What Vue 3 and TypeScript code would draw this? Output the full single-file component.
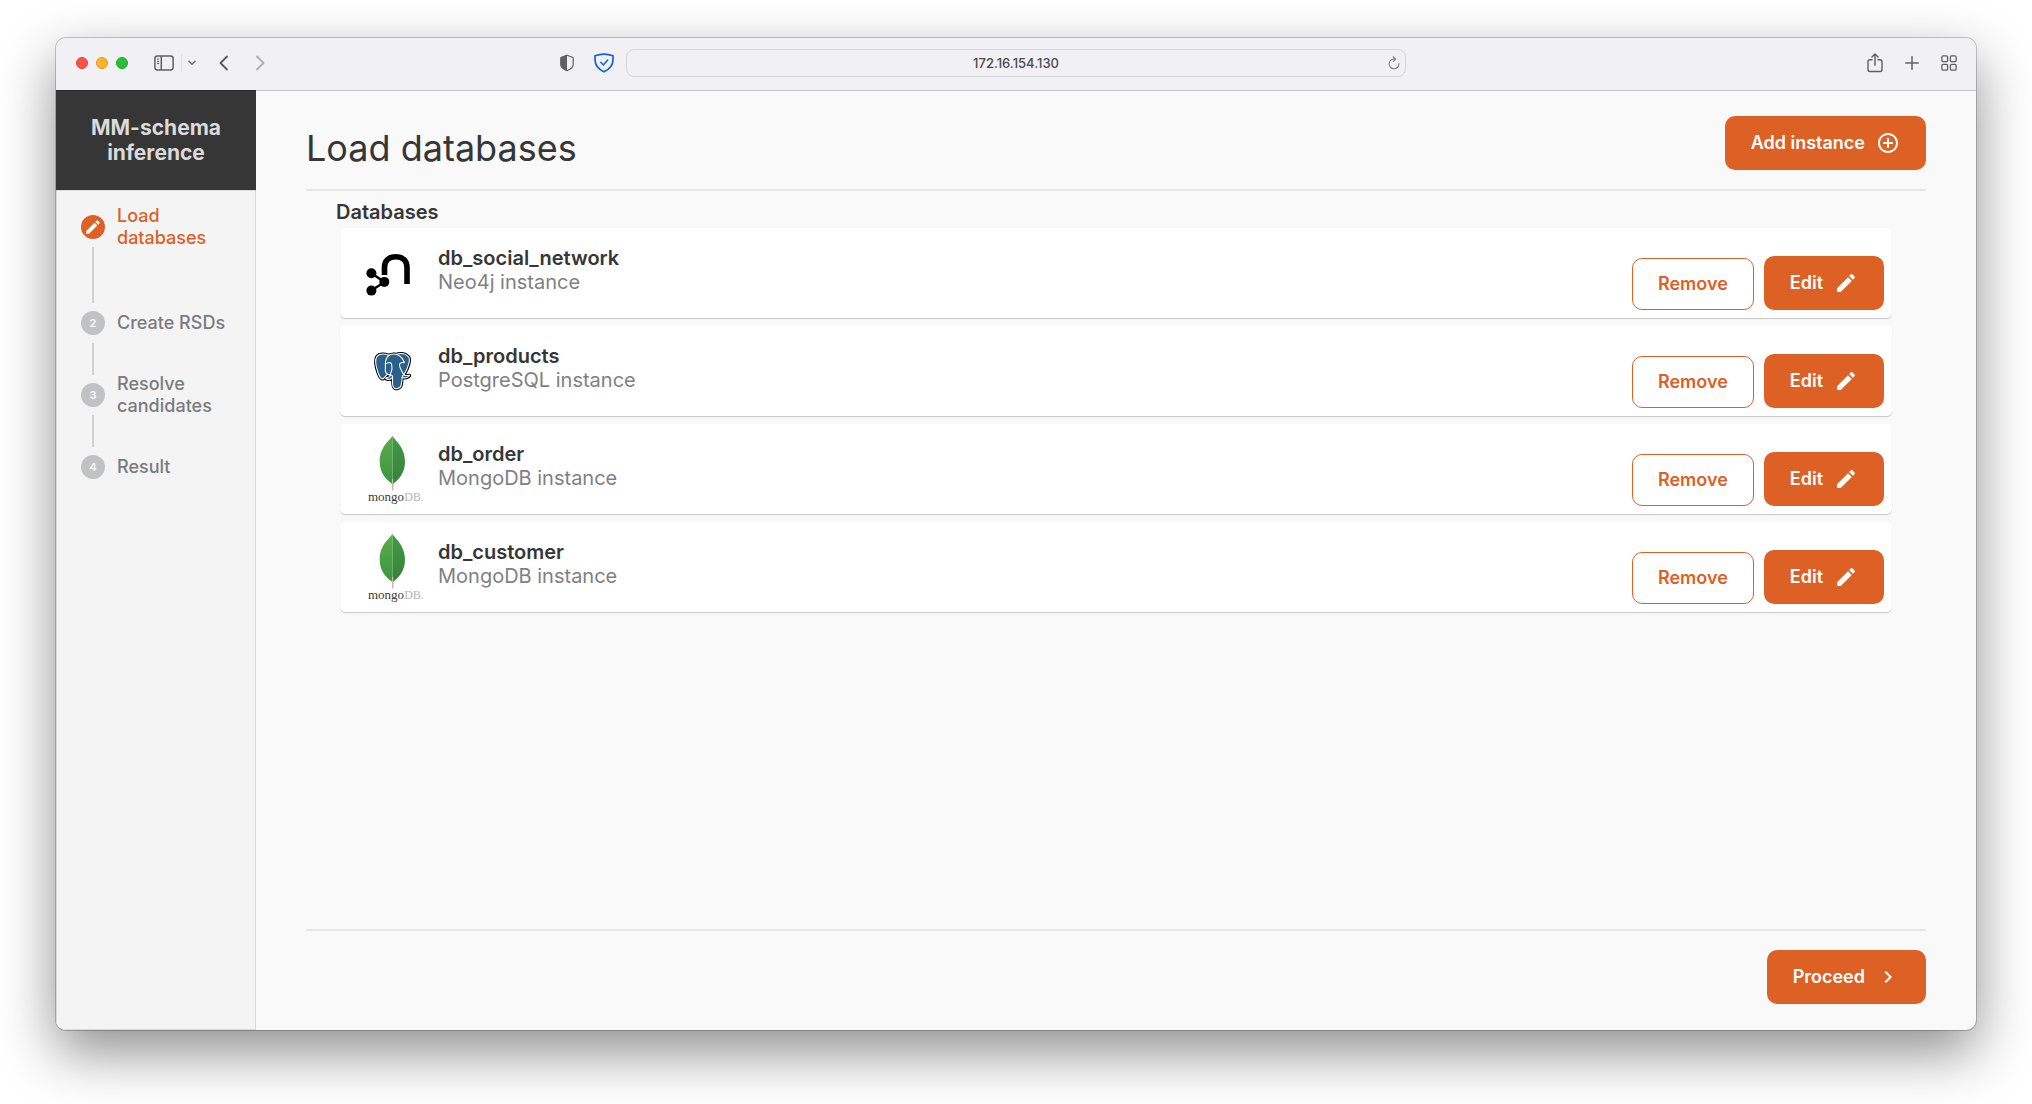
<script setup lang="ts">
type Engine = 'neo4j' | 'postgres' | 'mongo'

interface Database {
  name: string
  kind: string
  engine: Engine
}

interface Step {
  label: string
  state: 'active' | 'pending'
}

const databases: Database[] = [
  { name: 'db_social_network', kind: 'Neo4j instance', engine: 'neo4j' },
  { name: 'db_products', kind: 'PostgreSQL instance', engine: 'postgres' },
  { name: 'db_order', kind: 'MongoDB instance', engine: 'mongo' },
  { name: 'db_customer', kind: 'MongoDB instance', engine: 'mongo' },
]

const steps: Step[] = [
  { label: 'Load databases', state: 'active' },
  { label: 'Create RSDs', state: 'pending' },
  { label: 'Resolve candidates', state: 'pending' },
  { label: 'Result', state: 'pending' },
]

const pencil =
  'M3 17.25V21h3.75L17.81 9.94l-3.75-3.75L3 17.25zM20.71 7.04a.996.996 0 0 0 0-1.41l-2.34-2.34a.996.996 0 0 0-1.41 0l-1.83 1.83 3.75 3.75 1.83-1.83z'
</script>

<template>
  <div class="desktop">
    <div class="window">
      <header class="toolbar">
        <div class="tools tools-left">
          <div class="lights">
            <span class="light close"></span>
            <span class="light minimise"></span>
            <span class="light expand"></span>
          </div>
          <button class="tool sidebar-toggle" aria-label="Show sidebar">
            <svg width="20" height="16" viewBox="0 0 20 16" fill="none" stroke="#606063" stroke-width="1.5">
              <rect x="0.9" y="0.9" width="18.2" height="14" rx="2.4" />
              <path d="M7.3 1v14" />
              <path d="M3 4h2.2M3 6.3h2.2M3 8.6h2.2" stroke-width="1" />
            </svg>
          </button>
          <span class="rule"></span>
          <button class="tool caret" aria-label="Tab groups">
            <svg width="8" height="6" viewBox="0 0 8 6" fill="none" stroke="#6b6b6e" stroke-width="1.5" stroke-linecap="round" stroke-linejoin="round">
              <path d="M1 1.3l3 3 3-3" />
            </svg>
          </button>
          <button class="tool back" aria-label="Back">
            <svg width="10" height="16" viewBox="0 0 10 16" fill="none" stroke="#58585b" stroke-width="1.8" stroke-linecap="round" stroke-linejoin="round">
              <path d="M8 1.5L1.5 8 8 14.5" />
            </svg>
          </button>
          <button class="tool" aria-label="Forward">
            <svg width="10" height="16" viewBox="0 0 10 16" fill="none" stroke="#aeaeb0" stroke-width="1.8" stroke-linecap="round" stroke-linejoin="round">
              <path d="M2 1.5L8.5 8 2 14.5" />
            </svg>
          </button>
          <div class="shields">
            <button class="tool" aria-label="Privacy report">
              <svg width="14" height="18" viewBox="0 0 14 18">
                <path d="M7 1.2L12.6 3.3Q13.2 3.5 13.2 4.2V10.5C13.2 13.5 10.5 15.3 7 16.8C3.5 15.3 0.8 13.5 0.8 10.5V4.2Q0.8 3.5 1.4 3.3Z" fill="none" stroke="#606063" stroke-width="1.2" />
                <path d="M7 1.2V16.8C3.5 15.3 0.5 13.5 0.5 10.5V4.2Q0.5 3.5 1.4 3.3Z" fill="#606063" />
              </svg>
            </button>
            <button class="tool" aria-label="Content blocker">
              <svg width="20" height="20" viewBox="0 0 20 20" fill="none" stroke="#155fd8" stroke-width="1.7" stroke-linecap="round" stroke-linejoin="round">
                <path d="M1 2.7Q10 -0.5 19 2.7V6.5C19 12.5 15 16.5 10 18.8C5 16.5 1 12.5 1 6.5Z" />
                <path d="M6.8 9.3l2.5 2.6 4.4-4.9" stroke-width="1.5" />
              </svg>
            </button>
          </div>
        </div>

        <div class="address">
          <input type="text" value="172.16.154.130" aria-label="Address" />
          <button class="tool" aria-label="Reload">
            <svg width="12" height="14" viewBox="0 0 12 14" fill="none" stroke="#77777a" stroke-width="1.1" stroke-linecap="round" stroke-linejoin="round">
              <path d="M7 3.1A4.9 4.9 0 1 0 10.9 7.6" />
              <path d="M5.2 0.9L7.6 3.2 5.2 5.4" />
            </svg>
          </button>
        </div>

        <div class="tools tools-right">
          <button class="tool" aria-label="Share">
            <svg width="16" height="20" viewBox="0 0 16 20" fill="none" stroke="#606063" stroke-width="1.4" stroke-linecap="round" stroke-linejoin="round">
              <path d="M5 6.7H3Q1 6.7 1 8.7V16.5Q1 18.5 3 18.5H13Q15 18.5 15 16.5V8.7Q15 6.7 13 6.7H11" />
              <path d="M8 12.3V1.2M4.9 4.1L8 1l3.1 3.1" />
            </svg>
          </button>
          <button class="tool" aria-label="New tab">
            <svg width="14" height="14" viewBox="0 0 14 14" fill="none" stroke="#606063" stroke-width="1.5" stroke-linecap="round">
              <path d="M7 0.8v12.4M0.8 7h12.4" />
            </svg>
          </button>
          <button class="tool" aria-label="Tab overview">
            <svg width="16" height="16" viewBox="0 0 16 16" fill="none" stroke="#606063" stroke-width="1.3">
              <rect x="0.9" y="0.9" width="5.7" height="5.7" rx="1.2" />
              <rect x="9.4" y="0.9" width="5.7" height="5.7" rx="1.2" />
              <rect x="0.9" y="9.4" width="5.7" height="5.7" rx="1.2" />
              <rect x="9.4" y="9.4" width="5.7" height="5.7" rx="1.2" />
            </svg>
          </button>
        </div>
      </header>

      <div class="app">
        <aside class="sidebar">
          <div class="brand">MM-schema<br />inference</div>
          <ol class="steps">
            <li v-for="(step, i) in steps" :key="step.label" class="step" :class="step.state">
              <div class="head">
                <span class="badge">
                  <svg v-if="step.state === 'active'" width="18" height="18" viewBox="0 0 24 24" fill="#fff">
                    <path :d="pencil" />
                  </svg>
                  <template v-else>{{ i + 1 }}</template>
                </span>
                <span class="label">{{ step.label }}</span>
              </div>
              <span v-if="i < steps.length - 1" class="connector"></span>
            </li>
          </ol>
        </aside>

        <main class="main">
          <div class="page-head">
            <h1>Load databases</h1>
            <button class="btn primary">
              Add instance
              <svg width="24" height="24" viewBox="0 0 24 24" fill="#fff">
                <path d="M13 7h-2v4H7v2h4v4h2v-4h4v-2h-4V7zm-1-5C6.49 2 2 6.49 2 12s4.49 10 10 10 10-4.49 10-10S17.51 2 12 2zm0 18c-4.41 0-8-3.59-8-8s3.59-8 8-8 8 3.59 8 8-3.59 8-8 8z" />
              </svg>
            </button>
          </div>

          <section class="content">
            <h2>Databases</h2>
            <ul class="cards">
              <li v-for="db in databases" :key="db.name" class="card">
                <svg v-if="db.engine === 'neo4j'" class="logo" width="72" height="90" viewBox="0 0 72 90" role="img" aria-label="Neo4j">
                  <path d="M26.5 47V39.5C26.5 32.5 31 28.7 37.7 28.7S49 32.5 49 39.5V56" fill="none" stroke="#000" stroke-width="5.6" />
                  <circle cx="13.4" cy="45.2" r="5" />
                  <circle cx="26.3" cy="53.9" r="6" fill="#fff" />
                  <path d="M13.4 45.3L26.5 54 13.4 62.5" fill="none" stroke="#000" stroke-width="2.4" />
                  <circle cx="26.3" cy="53.9" r="5" />
                  <circle cx="13.4" cy="62.6" r="5" />
                </svg>

                <svg v-else-if="db.engine === 'postgres'" class="logo" width="72" height="90" viewBox="0 0 72 90" role="img" aria-label="PostgreSQL">
                  <g transform="translate(16 26) scale(0.086)">
                    <path d="M323.205,324.227c2.833-23.601,1.984-27.062,19.563-23.239l4.463,0.392c13.517,0.615,31.199-2.174,41.587-7c22.362-10.376,35.622-27.700,13.572-23.148c-50.297,10.376-53.755-6.655-53.755-6.655c53.111-78.803,75.313-178.836,56.149-203.322C352.514-5.534,262.036,26.049,260.522,26.869l-0.482,0.089c-9.938-2.062-21.060-3.294-33.554-3.496c-22.761-0.374-40.032,5.967-53.133,15.904c0,0-161.408-66.498-153.899,83.628c1.597,31.936,45.777,241.655,98.470,178.310c19.259-23.163,37.871-42.748,37.871-42.748c9.242,6.140,20.307,9.272,31.912,8.147l0.897-0.765c-0.281,2.876-0.157,5.689,0.359,9.019c-13.572,15.167-9.584,17.830-36.723,23.416c-27.457,5.659-11.326,15.734-0.797,18.367c12.768,3.193,42.305,7.716,62.268-20.224l-0.795,3.188c5.325,4.260,4.965,30.619,5.720,49.452c0.756,18.834,2.017,36.409,5.856,46.771c3.839,10.360,8.369,37.050,44.036,29.406c29.809-6.388,52.600-15.582,54.677-101.107z" stroke="#000" stroke-width="37.4" />
                    <path d="M402.395,271.230c-50.302,10.376-53.760-6.655-53.760-6.655c53.111-78.808,75.313-178.843,56.153-203.326c-52.270-66.785-142.752-35.200-144.262-34.380l-0.486,0.087c-9.938-2.063-21.060-3.292-33.560-3.496c-22.761-0.373-40.026,5.967-53.127,15.902c0,0-161.411-66.495-153.904,83.630c1.597,31.938,45.776,241.657,98.471,178.312c19.260-23.163,37.869-42.748,37.869-42.748c9.243,6.140,20.308,9.272,31.908,8.147l0.901-0.765c-0.280,2.876-0.152,5.689,0.361,9.019c-13.575,15.167-9.586,17.830-36.723,23.416c-27.459,5.659-11.328,15.734-0.796,18.367c12.768,3.193,42.307,7.716,62.266-20.224l-0.796,3.188c5.319,4.260,9.054,27.711,8.428,48.969c-0.626,21.259-1.044,35.854,3.147,47.254c4.191,11.400,8.368,37.050,44.042,29.406c29.809-6.388,45.256-22.942,47.405-50.555c1.525-19.631,4.976-16.729,5.194-34.280l2.768-8.309c3.192-26.611,0.507-35.196,18.872-31.203l4.463,0.392c13.517,0.615,31.208-2.174,41.591-7c22.358-10.376,35.618-27.700,13.573-23.148z" fill="#2b5f8c" />
                    <g fill="none" stroke="#fff" stroke-width="12.5" stroke-linecap="round" stroke-linejoin="round">
                      <path d="M215.866,286.484c-1.385,49.516,0.348,99.377,5.193,111.495c4.848,12.118,15.223,35.688,50.900,28.045c29.806-6.390,40.651-18.756,45.357-46.051c3.466-20.082,10.148-75.854,11.005-87.281" />
                      <path d="M173.104,38.256c0,0-161.521-66.016-154.012,84.109c1.597,31.938,45.779,241.664,98.473,178.316c19.256-23.166,36.671-41.335,36.671-41.335" />
                      <path d="M260.349,26.207c-5.591,1.753,89.848-34.889,144.087,34.417c19.159,24.484-3.043,124.519-56.153,203.329" />
                      <path d="M348.282,263.953c0,0,3.461,17.036,53.764,6.653c22.040-4.552,8.776,12.774-13.577,23.155c-18.345,8.514-59.474,10.696-60.146-1.069c-1.729-30.355,21.647-21.133,19.960-28.739c-1.525-6.850-11.979-13.573-18.894-30.338c-6.037-14.633-82.796-126.849,21.287-110.183c3.813-0.789-27.146-99.002-124.553-100.599c-97.385-1.597-94.190,119.762-94.190,119.762" />
                      <path d="M188.604,274.334c-13.577,15.166-9.584,17.829-36.723,23.417c-27.459,5.660-11.326,15.733-0.797,18.365c12.768,3.195,42.307,7.718,62.266-20.229c6.078-8.509-0.036-22.086-8.385-25.547c-4.034-1.671-9.428-3.765-16.361,3.994z" />
                      <path d="M187.715,274.069c-1.368-8.917,2.930-19.528,7.536-31.942c6.922-18.626,22.893-37.255,10.117-96.339c-9.523-44.029-73.396-9.163-73.436-3.193c-0.039,5.968,2.889,30.260-1.067,58.548c-5.162,36.913,23.488,68.132,56.479,64.938" />
                    </g>
                  </g>
                </svg>

                <svg v-else class="logo" width="72" height="90" viewBox="0 0 72 90" role="img" aria-label="MongoDB">
                  <defs>
                    <linearGradient :id="`${db.name}-left`" x1="0" y1="0" x2="0" y2="1">
                      <stop offset="0" stop-color="#5cab4b" />
                      <stop offset="1" stop-color="#39973f" />
                    </linearGradient>
                    <linearGradient :id="`${db.name}-right`" x1="0" y1="0" x2="0" y2="1">
                      <stop offset="0" stop-color="#439a43" />
                      <stop offset="1" stop-color="#38803b" />
                    </linearGradient>
                  </defs>
                  <path d="M34 58L34.2 66.5H35.2L35.8 58Z" fill="#b8ab8d" />
                  <path d="M34.4 11.5C33.5 15.5 21.7 21.5 21.7 37.5C21.7 50 29 56 34.6 60.3Z" :fill="`url(#${db.name}-left)`" />
                  <path d="M34.4 11.5C35.5 15.5 47 22 47 37.5C47 50 40 56 34.6 60.3Z" :fill="`url(#${db.name}-right)`" />
                  <path d="M34.6 55V65" stroke="#c9bfa3" stroke-width="1.2" />
                  <text x="10" y="77" class="mongo">mongo<tspan class="mongo-db">DB.</tspan></text>
                </svg>

                <div class="info">
                  <div class="name">{{ db.name }}</div>
                  <div class="kind">{{ db.kind }}</div>
                </div>
                <div class="actions">
                  <button class="btn outline">Remove</button>
                  <button class="btn primary">
                    Edit
                    <svg width="24" height="24" viewBox="0 0 24 24" fill="#fff"><path :d="pencil" /></svg>
                  </button>
                </div>
              </li>
            </ul>
          </section>

          <footer class="page-foot">
            <button class="btn primary">
              Proceed
              <svg width="24" height="24" viewBox="0 0 24 24" fill="#fff">
                <path d="M10 6L8.59 7.41 13.17 12l-4.58 4.59L10 18l6-6z" />
              </svg>
            </button>
          </footer>
        </main>
      </div>
    </div>
  </div>
</template>

<style>
body {
  margin: 0;
  background: #fff;
}
</style>

<style scoped>
* {
  box-sizing: border-box;
}

.desktop {
  display: flex;
  min-height: 100vh;
  padding: 38px 56px 74px;
  font-family: Inter, "Liberation Sans", sans-serif;
  color: #363636;
}

.window {
  display: flex;
  flex-direction: column;
  flex: 1;
  min-width: 0;
  border-radius: 10px;
  overflow: hidden;
  background: #f9f9f9;
  box-shadow: 0 0 0 1px rgba(0, 0, 0, 0.2), 0 22px 56px rgba(0, 0, 0, 0.45);
}

.toolbar {
  position: relative;
  display: grid;
  grid-template-columns: 1fr minmax(200px, 780px) 1fr;
  align-items: center;
  height: 53px;
  margin-bottom: -1px;
  padding-bottom: 2px;
  background: #f1f1f3;
  background-clip: padding-box;
  border-bottom: 1px solid rgba(0, 0, 0, 0.2);
}

.tools {
  display: flex;
  align-items: center;
}

.tools-left {
  padding-left: 20px;
}

.tools-right {
  justify-content: flex-end;
  gap: 22px;
  padding-right: 19px;
}

.tool {
  display: flex;
  padding: 0;
  border: 0;
  background: none;
}

.lights {
  display: flex;
  gap: 8px;
}

.light {
  width: 12px;
  height: 12px;
  border-radius: 50%;
}

.close {
  background: #ff524c;
  border: 1px solid #e1403c;
}

.minimise {
  background: #fdb227;
  border: 1px solid #e09a1c;
}

.expand {
  background: #26c137;
  border: 1px solid #1ea52d;
}

.sidebar-toggle {
  margin-left: 26px;
}

.rule {
  width: 1px;
  height: 18px;
  margin: 0 6px 0 7px;
  background: #dddddf;
}

.back {
  margin: 0 26px 0 23px;
}

.shields {
  display: flex;
  align-items: center;
  gap: 20px;
  margin: 0 12px 0 auto;
}

.address {
  display: flex;
  align-items: center;
  height: 28px;
  padding: 0 5px 0 17px;
  border: 1px solid #d5d5d7;
  border-radius: 8px;
}

.address input {
  flex: 1;
  min-width: 0;
  padding: 0;
  border: 0;
  outline: 0;
  background: none;
  font: 500 13px/18px Inter, "Liberation Sans", sans-serif;
  color: #4a4a4c;
  text-align: center;
}

.app {
  display: flex;
  flex: 1;
}

.sidebar {
  flex: none;
  width: 200px;
  background: #f4f4f4;
  border: 1px solid #d9d9d9;
  border-top: 0;
}

.brand {
  display: flex;
  align-items: center;
  justify-content: center;
  height: 100px;
  margin: 0 -1px;
  background: #363636;
  color: #dbdbdb;
  font-size: 21px;
  font-weight: 700;
  line-height: 25px;
  text-align: center;
}

.steps {
  margin: 0;
  padding: 24px 10px 0 24px;
  border-top: 1px solid #dbdbdb;
  list-style: none;
}

.head {
  display: flex;
  align-items: center;
  gap: 12px;
  height: 24px;
}

.badge {
  display: flex;
  flex: none;
  align-items: center;
  justify-content: center;
  width: 24px;
  height: 24px;
  border-radius: 50%;
  background: #c0c2c4;
  color: #f4f4f4;
  font-size: 11px;
  font-weight: 700;
}

.label {
  font-size: 18px;
  font-weight: 500;
  line-height: 22px;
  color: #7a7b7e;
}

.active .badge {
  background: #dd6025;
}

.active .label {
  color: #dd6025;
}

.connector {
  display: block;
  width: 2px;
  height: 32px;
  margin: 8px 0 8px 11px;
  background: #d2d2d2;
}

.active .connector {
  height: 56px;
}

.main {
  display: flex;
  flex-direction: column;
  flex: 1;
  min-width: 0;
  padding: 0 50px;
}

.page-head {
  display: flex;
  align-items: center;
  justify-content: space-between;
  height: 101px;
  padding-top: 6px;
  border-bottom: 2px solid #e5e5e5;
}

h1 {
  margin: 10px 0 0;
  font-size: 36px;
  font-weight: 400;
  line-height: 44px;
}

.content {
  flex: 1;
  padding: 8px 34px 0;
}

h2 {
  margin: 0 -4px 3px;
  font-size: 20px;
  font-weight: 600;
  line-height: 26px;
}

.cards {
  display: flex;
  flex-direction: column;
  gap: 8px;
  margin: 0;
  padding: 0;
  list-style: none;
}

.card {
  display: flex;
  height: 90px;
  padding: 0 8px 8px 18px;
  border-radius: 5px;
  background: #fff;
  box-shadow: 0 1px 1px rgba(0, 0, 0, 0.2);
}

.logo {
  flex: none;
}

.mongo {
  font: 13px "Liberation Serif", serif;
  fill: #3d3a38;
}

.mongo-db {
  font-size: 12px;
  fill: #b4b4b4;
}

.info {
  flex: 1;
  padding: 18px 0 0 8px;
  font-size: 20px;
  line-height: 24px;
}

.name {
  font-weight: 600;
}

.kind {
  color: #7f8083;
}

.actions {
  display: flex;
  align-items: flex-end;
  gap: 10px;
}

.btn {
  display: flex;
  align-items: center;
  gap: 11px;
  height: 54px;
  padding: 0 26px;
  border: 0;
  border-radius: 10px;
  font: 600 18px/24px Inter, "Liberation Sans", sans-serif;
  white-space: nowrap;
}

.primary {
  background: #dd6025;
  color: #fff;
}

.outline {
  height: 52px;
  padding: 0 25px;
  border: 1px solid #dd6025;
  background: #fff;
  color: #dd6025;
}

.page-foot {
  display: flex;
  justify-content: flex-end;
  height: 101px;
  padding-top: 19px;
  border-top: 2px solid #e5e5e5;
}
</style>
